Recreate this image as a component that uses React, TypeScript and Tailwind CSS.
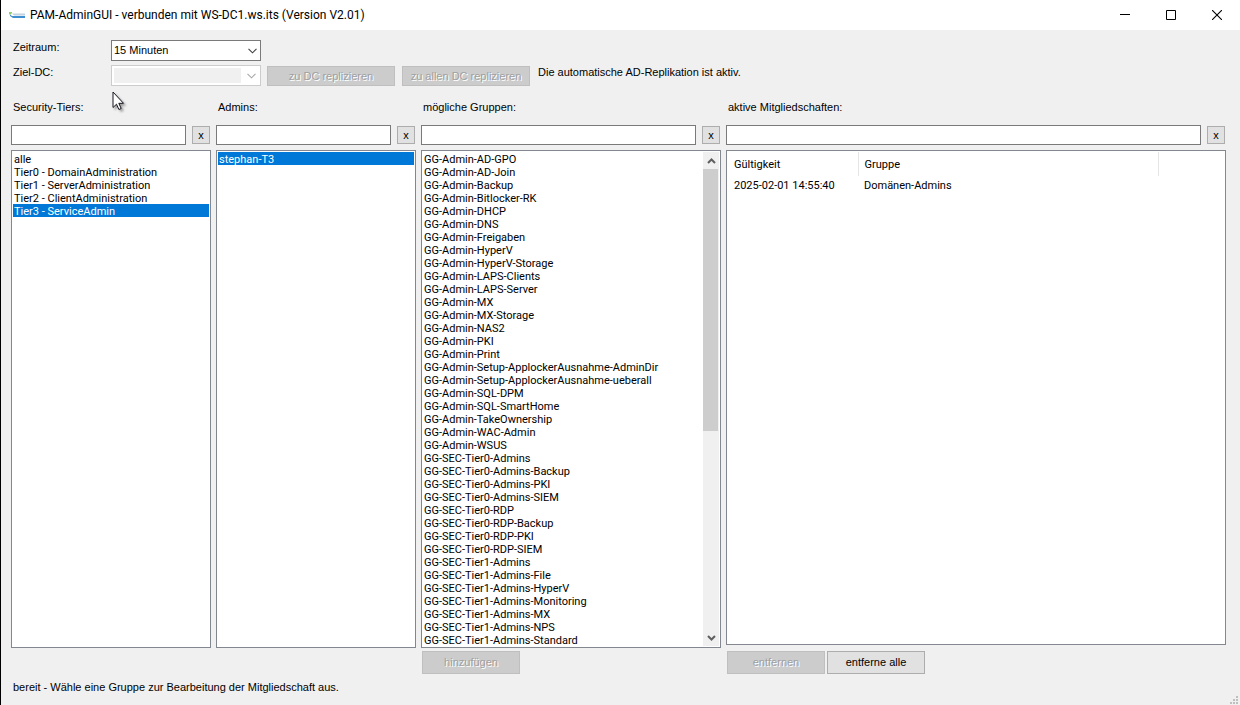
import { useState } from "react";
import type { ReactNode } from "react";

const tiers = [
  "alle",
  "Tier0 - DomainAdministration",
  "Tier1 - ServerAdministration",
  "Tier2 - ClientAdministration",
  "Tier3 - ServiceAdmin",
];

const admins = ["stephan-T3"];

const groups = [
  "GG-Admin-AD-GPO",
  "GG-Admin-AD-Join",
  "GG-Admin-Backup",
  "GG-Admin-Bitlocker-RK",
  "GG-Admin-DHCP",
  "GG-Admin-DNS",
  "GG-Admin-Freigaben",
  "GG-Admin-HyperV",
  "GG-Admin-HyperV-Storage",
  "GG-Admin-LAPS-Clients",
  "GG-Admin-LAPS-Server",
  "GG-Admin-MX",
  "GG-Admin-MX-Storage",
  "GG-Admin-NAS2",
  "GG-Admin-PKI",
  "GG-Admin-Print",
  "GG-Admin-Setup-ApplockerAusnahme-AdminDir",
  "GG-Admin-Setup-ApplockerAusnahme-ueberall",
  "GG-Admin-SQL-DPM",
  "GG-Admin-SQL-SmartHome",
  "GG-Admin-TakeOwnership",
  "GG-Admin-WAC-Admin",
  "GG-Admin-WSUS",
  "GG-SEC-Tier0-Admins",
  "GG-SEC-Tier0-Admins-Backup",
  "GG-SEC-Tier0-Admins-PKI",
  "GG-SEC-Tier0-Admins-SIEM",
  "GG-SEC-Tier0-RDP",
  "GG-SEC-Tier0-RDP-Backup",
  "GG-SEC-Tier0-RDP-PKI",
  "GG-SEC-Tier0-RDP-SIEM",
  "GG-SEC-Tier1-Admins",
  "GG-SEC-Tier1-Admins-File",
  "GG-SEC-Tier1-Admins-HyperV",
  "GG-SEC-Tier1-Admins-Monitoring",
  "GG-SEC-Tier1-Admins-MX",
  "GG-SEC-Tier1-Admins-NPS",
  "GG-SEC-Tier1-Admins-Standard",
];

function AppIcon() {
  return (
    <svg width="16" height="16" viewBox="0 0 16 16" aria-hidden="true">
      <path d="M0 5h3v1.500H2v1H0z" fill="#8fcf6a" />
      <path d="M3 6.500h13v2H5z" fill="#c3d3df" />
      <path d="M1 7.500l2 1.500h13v2H4L1 9z" fill="#3d8fd0" />
    </svg>
  );
}

function Chevron({ color }: { color: string }) {
  return (
    <svg
      className="pointer-events-none absolute top-1/2 right-1 -translate-y-1/2"
      width="9"
      height="6"
      viewBox="0 0 9 6"
      aria-hidden="true"
    >
      <path d="M0.500 0.800l4 4 4-4" fill="none" stroke={color} strokeWidth="1.100" />
    </svg>
  );
}

function PushButton({
  children,
  disabled = false,
  className,
}: {
  children: ReactNode;
  disabled?: boolean;
  className: string;
}) {
  const look = disabled
    ? "border-[#bfbfbf] bg-[#cccccc] text-[#a0a0a0] [text-shadow:1px_1px_0_#ffffff]"
    : "border-[#adadad] bg-[#e1e1e1] text-black";
  return (
    <button type="button" disabled={disabled} className={`border whitespace-nowrap ${look} ${className}`}>
      {children}
    </button>
  );
}

function FilterRow({ id, title }: { id: string; title: string }) {
  return (
    <>
      <label htmlFor={id} className="mb-[11px] block pl-0.5">
        {title}
      </label>
      <div className="mb-[5px] flex items-center gap-1.5 pr-px">
        <input id={id} type="text" className="h-5 min-w-0 flex-1 border border-[#7a7a7a] bg-white px-1 outline-none" />
        <PushButton className="h-[18px] w-[18px]">x</PushButton>
      </div>
    </>
  );
}

function ListBox({
  label,
  items,
  initial,
  children,
}: {
  label: string;
  items: string[];
  initial?: string;
  children?: ReactNode;
}) {
  const [selected, setSelected] = useState(initial);
  return (
    <div className="flex flex-1 border border-[#828790] bg-white p-px">
      <ul role="listbox" aria-label={label} className="min-w-0 flex-1 font-[Roboto,Arial,sans-serif]">
        {items.map((item) => (
          <li
            key={item}
            role="option"
            aria-selected={item === selected}
            onClick={() => setSelected(item)}
            className={`h-[13px] overflow-hidden pl-px leading-[15px] whitespace-nowrap ${
              item === selected ? "bg-[#0078d7] text-white" : ""
            }`}
          >
            {item}
          </li>
        ))}
      </ul>
      {children}
    </div>
  );
}

function ScrollBar() {
  return (
    <div className="flex w-4 flex-col bg-[#f0f0f0]">
      <button type="button" aria-label="Nach oben" className="flex h-[17px] items-center justify-center">
        <svg width="9" height="6" viewBox="0 0 9 6" aria-hidden="true">
          <path d="M1 5l3.500-3.500L8 5" fill="none" stroke="#606060" strokeWidth="2" />
        </svg>
      </button>
      <div className="flex-1">
        <div className="h-[57%] w-[15px] bg-[#cdcdcd]" />
      </div>
      <button type="button" aria-label="Nach unten" className="flex h-[17px] items-center justify-center">
        <svg width="9" height="6" viewBox="0 0 9 6" aria-hidden="true">
          <path d="M1 1l3.500 3.500L8 1" fill="none" stroke="#606060" strokeWidth="2" />
        </svg>
      </button>
    </div>
  );
}

function TitleBar() {
  return (
    <header className="flex h-[30px] items-center bg-white pl-2">
      <AppIcon />
      <h1 className="ml-[5px] flex-1 font-[Roboto,Arial,sans-serif] text-[12px] leading-4 whitespace-nowrap">
        PAM-AdminGUI - verbunden mit WS-DC1.ws.its (Version V2.01)
      </h1>
      <button type="button" aria-label="Minimieren" className="flex h-full w-[46px] items-center justify-center">
        <svg width="10" height="10" viewBox="0 0 10 10" aria-hidden="true">
          <path d="M0 4.500h10" stroke="#000" />
        </svg>
      </button>
      <button type="button" aria-label="Maximieren" className="flex h-full w-[46px] items-center justify-center">
        <svg width="10" height="10" viewBox="0 0 10 10" aria-hidden="true">
          <path d="M0.500 0.500h9v9h-9z" fill="none" stroke="#000" />
        </svg>
      </button>
      <button type="button" aria-label="Schließen" className="flex h-full w-[46px] items-center justify-center">
        <svg width="10" height="10" viewBox="0 0 10 10" aria-hidden="true">
          <path d="M0 0l10 10M10 0L0 10" stroke="#000" strokeWidth="1.100" />
        </svg>
      </button>
    </header>
  );
}

function Settings() {
  return (
    <div className="flex flex-col gap-1 pt-2.5">
      <div className="flex items-start">
        <label htmlFor="zeitraum" className="w-[100px] pt-px pl-0.5">
          Zeitraum:
        </label>
        <div className="relative w-[150px]">
          <select
            id="zeitraum"
            className="block h-[21px] w-full appearance-none border border-[#7a7a7a] bg-white pl-0.5 outline-none"
          >
            <option>15 Minuten</option>
            <option>30 Minuten</option>
            <option>60 Minuten</option>
          </select>
          <Chevron color="#404040" />
        </div>
      </div>
      <div className="flex items-start">
        <label htmlFor="ziel-dc" className="w-[100px] pt-px pl-0.5">
          Ziel-DC:
        </label>
        <div className="relative mr-1.5 w-[150px] border border-[#cccccc] bg-white py-0.5 pr-[19px] pl-0.5">
          <select id="ziel-dc" disabled className="block h-[15px] w-full appearance-none bg-[#f0f0f0] opacity-100" />
          <Chevron color="#a8a8a8" />
        </div>
        <div className="flex gap-[7px] pt-px">
          <PushButton disabled className="h-5 w-32">
            zu DC replizieren
          </PushButton>
          <PushButton disabled className="h-5 w-32">
            zu allen DC replizieren
          </PushButton>
        </div>
        <p className="pt-px pl-2 whitespace-nowrap">Die automatische AD-Replikation ist aktiv.</p>
      </div>
    </div>
  );
}

function Memberships() {
  return (
    <div className="flex-1 border border-[#828790] bg-white p-px">
      <table
        aria-label="aktive Mitgliedschaften"
        className="w-full table-fixed text-left font-[Roboto,Arial,sans-serif]"
      >
        <thead>
          <tr className="h-6">
            <th className="w-[130px] border-r border-[#e5e5e5] pl-1.5 font-normal">Gültigkeit</th>
            <th className="w-[300px] border-r border-[#e5e5e5] pl-1.5 font-normal">Gruppe</th>
            <td />
          </tr>
        </thead>
        <tbody>
          <tr className="h-[18px]">
            <td className="pl-1.5">2025-02-01 14:55:40</td>
            <td className="pl-1.5">Domänen-Admins</td>
            <td />
          </tr>
        </tbody>
      </table>
    </div>
  );
}

function SizeGrip() {
  return (
    <svg className="absolute right-0.5 bottom-px" width="8" height="8" viewBox="0 0 8 8" aria-hidden="true">
      <path d="M6 0h2v2H6zM3 3h2v2H3zM6 3h2v2H6zM0 6h2v2H0zM3 6h2v2H3zM6 6h2v2H6z" fill="#bfbfbf" />
    </svg>
  );
}

function Pointer() {
  return (
    <svg
      className="pointer-events-none absolute top-[91px] left-[111px] drop-shadow-[2px_2px_1px_rgba(0,0,0,0.35)]"
      width="13"
      height="20"
      viewBox="0 0 13 20"
      aria-hidden="true"
    >
      <path
        d="M1 1v15.500l3.500-3.300 2.400 5.300 2.300-1-2.400-5.200H11.500z"
        fill="#fff"
        stroke="#15151f"
        strokeWidth="1"
      />
    </svg>
  );
}

export default function App() {
  return (
    <div className="relative flex min-h-screen flex-col border-l border-black bg-[#f0f0f0] font-['Liberation_Sans',Arial,sans-serif] text-[11px] leading-[13px] text-black">
      <TitleBar />
      <main className="flex flex-1 flex-col pr-3.5 pl-2.5">
        <Settings />
        <div className="flex gap-[5px] pt-[15px]">
          <section className="flex w-[200px] flex-col">
            <FilterRow id="filter-tiers" title="Security-Tiers:" />
            <ListBox label="Security-Tiers" items={tiers} initial="Tier3 - ServiceAdmin" />
          </section>
          <section className="flex w-[200px] flex-col">
            <FilterRow id="filter-admins" title="Admins:" />
            <ListBox label="Admins" items={admins} initial="stephan-T3" />
          </section>
          <section className="flex w-[300px] flex-col">
            <FilterRow id="filter-groups" title="mögliche Gruppen:" />
            <ListBox label="mögliche Gruppen" items={groups}>
              <ScrollBar />
            </ListBox>
          </section>
          <section className="flex min-w-0 flex-1 flex-col pb-[3px]">
            <FilterRow id="filter-active" title="aktive Mitgliedschaften:" />
            <Memberships />
          </section>
        </div>
        <div className="flex gap-[5px] pt-[3px]">
          <div className="w-[405px]" />
          <div className="w-[300px] pl-px">
            <PushButton disabled className="block h-[23px] w-[98px]">
              hinzufügen
            </PushButton>
          </div>
          <div className="flex flex-1 gap-0.5 pl-px">
            <PushButton disabled className="h-[23px] w-[98px]">
              entfernen
            </PushButton>
            <PushButton className="h-[23px] w-[98px]">entferne alle</PushButton>
          </div>
        </div>
        <p role="status" className="pt-[7px] pl-0.5">
          bereit - Wähle eine Gruppe zur Bearbeitung der Mitgliedschaft aus.
        </p>
      </main>
      <Pointer />
      <SizeGrip />
    </div>
  );
}
